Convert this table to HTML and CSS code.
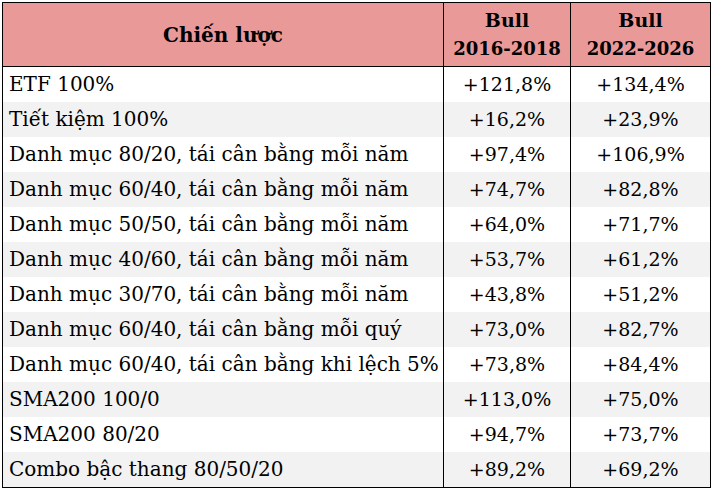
FILE: index.html
```html
<!DOCTYPE html>
<html lang="vi">
<head>
<meta charset="utf-8">
<title>Chiến lược</title>
<link rel="stylesheet" href="styles.css">
</head>
<body>
<table class="perf">
  <colgroup>
    <col class="c-name">
    <col class="c-a">
    <col class="c-b">
  </colgroup>
  <thead>
    <tr>
      <th class="h-name">Chiến lược</th>
      <th>Bull<br><span class="yr">2016-2018</span></th>
      <th>Bull<br><span class="yr">2022-2026</span></th>
    </tr>
  </thead>
  <tbody>
    <tr><td>ETF 100%</td><td>+121,8%</td><td>+134,4%</td></tr>
    <tr><td>Tiết kiệm 100%</td><td>+16,2%</td><td>+23,9%</td></tr>
    <tr><td>Danh mục 80/20, tái cân bằng mỗi năm</td><td>+97,4%</td><td>+106,9%</td></tr>
    <tr><td>Danh mục 60/40, tái cân bằng mỗi năm</td><td>+74,7%</td><td>+82,8%</td></tr>
    <tr><td>Danh mục 50/50, tái cân bằng mỗi năm</td><td>+64,0%</td><td>+71,7%</td></tr>
    <tr><td>Danh mục 40/60, tái cân bằng mỗi năm</td><td>+53,7%</td><td>+61,2%</td></tr>
    <tr><td>Danh mục 30/70, tái cân bằng mỗi năm</td><td>+43,8%</td><td>+51,2%</td></tr>
    <tr><td>Danh mục 60/40, tái cân bằng mỗi quý</td><td>+73,0%</td><td>+82,7%</td></tr>
    <tr><td>Danh mục 60/40, tái cân bằng khi lệch 5%</td><td>+73,8%</td><td>+84,4%</td></tr>
    <tr><td>SMA200 100/0</td><td>+113,0%</td><td>+75,0%</td></tr>
    <tr><td>SMA200 80/20</td><td>+94,7%</td><td>+73,7%</td></tr>
    <tr><td>Combo bậc thang 80/50/20</td><td>+89,2%</td><td>+69,2%</td></tr>
  </tbody>
</table>
</body>
</html>
```

FILE: styles.css
```css
html, body {
  margin: 0;
  padding: 0;
  background: #ffffff;
}

.perf {
  margin: 2px 0 0 2px;
  width: 708px;
  border-collapse: collapse;
  table-layout: fixed;
  font-family: "DejaVu Serif", "Liberation Serif", serif;
  color: #000000;
  border: 1.5px solid #000000;
}

.c-name { width: 441px; }
.c-a { width: 127px; }
.c-b { width: 140px; }

.perf th {
  background: #ea9999;
  font-weight: 700;
  font-size: 19px;
  line-height: 28px;
  height: 63px;
  padding: 0;
  text-align: center;
  vertical-align: middle;
  border-left: 1.5px solid #000000;
  border-bottom: 1.5px solid #000000;
}

.perf th.h-name {
  font-size: 20px;
}

.perf th .yr {
  font-size: 18px;
}

.perf td {
  font-size: 20px;
  height: 35px;
  padding: 0 0 0 6px;
  line-height: 35px;
  white-space: nowrap;
  vertical-align: middle;
  border-left: 1.5px solid #000000;
}

.perf td + td {
  font-size: 19px;
  text-align: center;
  padding: 0;
}

.perf tbody tr:nth-child(even) td {
  background: #f2f2f2;
}
```
